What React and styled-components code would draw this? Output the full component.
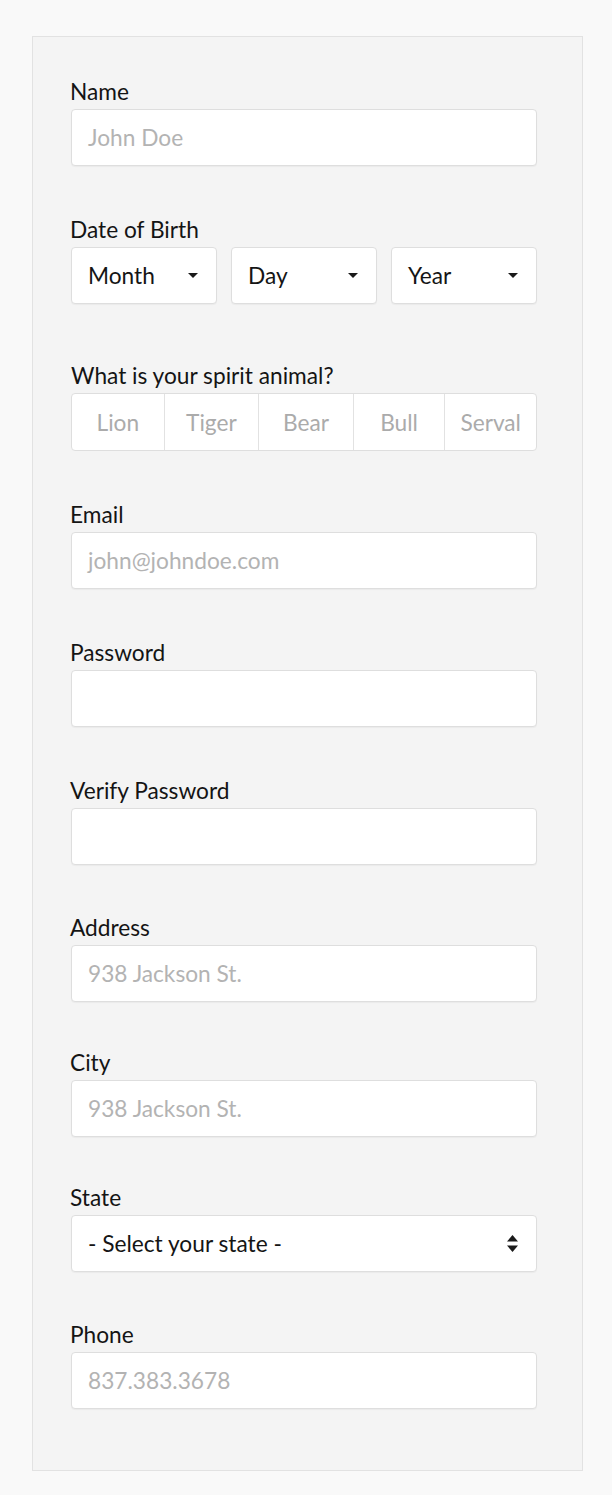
import React from "react";
import styled, { createGlobalStyle } from "styled-components";

const Global = createGlobalStyle`
  html, body { margin: 0; padding: 0; background: #f9f9f9; }
  body { font-family: Lato, "Open Sans", sans-serif; color: #151515; }
  * { box-sizing: border-box; }
`;

const Page = styled.div`
  padding: 36px 29px 25px 32px;
`;

const Card = styled.form`
  background: #f4f4f4;
  border: 1px solid #e2e2e2;
  padding: 41px 45px 61px 37px;
  display: flex;
  flex-direction: column;
`;

const Field = styled.div`
  display: flex;
  flex-direction: column;
  margin-top: ${(p) => p.$gap || 0}px;
`;

const Label = styled.label`
  font-size: 22.7px;
  line-height: 27px;
  margin-bottom: 4px;
  padding-left: ${(p) => (p.$indent ? "1px" : "0")};
  color: #141414;
`;

const Box = styled.div`
  height: 57px;
  background: #fff;
  border: 1px solid #dedede;
  border-radius: 4px;
  box-shadow: 0 1px 1px rgba(0, 0, 0, 0.04);
  margin-left: 1px;
  display: flex;
  align-items: center;
  padding: 0 16px;
  font-size: 22.7px;
  color: ${(p) => (p.$placeholder ? "#b3b3b3" : "#151515")};
`;

const Row = styled.div`
  display: grid;
  grid-template-columns: repeat(3, 1fr);
  gap: 14px;
  margin-left: 1px;
`;

const SelectBox = styled(Box)`
  margin-left: ${(p) => (p.$inRow ? "0" : "1px")};
  justify-content: space-between;
  padding: 0 18px 0 16px;
`;

const Segmented = styled.div`
  height: 58px;
  margin-left: 1px;
  background: #fff;
  border: 1px solid #dedede;
  border-radius: 4px;
  display: grid;
  grid-template-columns: 92fr 95fr 95fr 92fr 92fr;
`;

const Segment = styled.div`
  display: flex;
  align-items: center;
  justify-content: center;
  font-size: 22.7px;
  color: #ababab;
  border-left: ${(p) => (p.$first ? "none" : "1px solid #e2e2e2")};
`;

const Caret = () => (
  <svg width="10" height="5" viewBox="0 0 10 5">
    <path d="M0 0 L10 0 L5 5 Z" fill="#1a1a1a" />
  </svg>
);

const UpDown = () => (
  <svg width="11" height="17" viewBox="0 0 11 17">
    <path d="M5.5 0 L11 6.5 L0 6.5 Z" fill="#1a1a1a" />
    <path d="M0 10.5 L11 10.5 L5.5 17 Z" fill="#1a1a1a" />
  </svg>
);

const TextField = ({ label, placeholder, gap }) => (
  <Field $gap={gap}>
    <Label>{label}</Label>
    <Box $placeholder={!!placeholder}>{placeholder || ""}</Box>
  </Field>
);

export default function App() {
  return (
    <>
      <Global />
      <Page>
        <Card>
          <TextField label="Name" placeholder="John Doe" />
          <Field $gap={50}>
            <Label>Date of Birth</Label>
            <Row>
              {["Month", "Day", "Year"].map((t) => (
                <SelectBox key={t} $inRow>
                  <span>{t}</span>
                  <Caret />
                </SelectBox>
              ))}
            </Row>
          </Field>
          <Field $gap={58}>
            <Label $indent>What is your spirit animal?</Label>
            <Segmented>
              {["Lion", "Tiger", "Bear", "Bull", "Serval"].map((t, i) => (
                <Segment key={t} $first={i === 0}>
                  {t}
                </Segment>
              ))}
            </Segmented>
          </Field>
          <TextField gap={50} label="Email" placeholder="john@johndoe.com" />
          <TextField gap={50} label="Password" />
          <TextField gap={50} label="Verify Password" />
          <TextField gap={49} label="Address" placeholder="938 Jackson St." />
          <TextField gap={47} label="City" placeholder="938 Jackson St." />
          <Field $gap={47}>
            <Label>State</Label>
            <SelectBox>
              <span>- Select your state -</span>
              <UpDown />
            </SelectBox>
          </Field>
          <TextField gap={49} label="Phone" placeholder="837.383.3678" />
        </Card>
      </Page>
    </>
  );
}
